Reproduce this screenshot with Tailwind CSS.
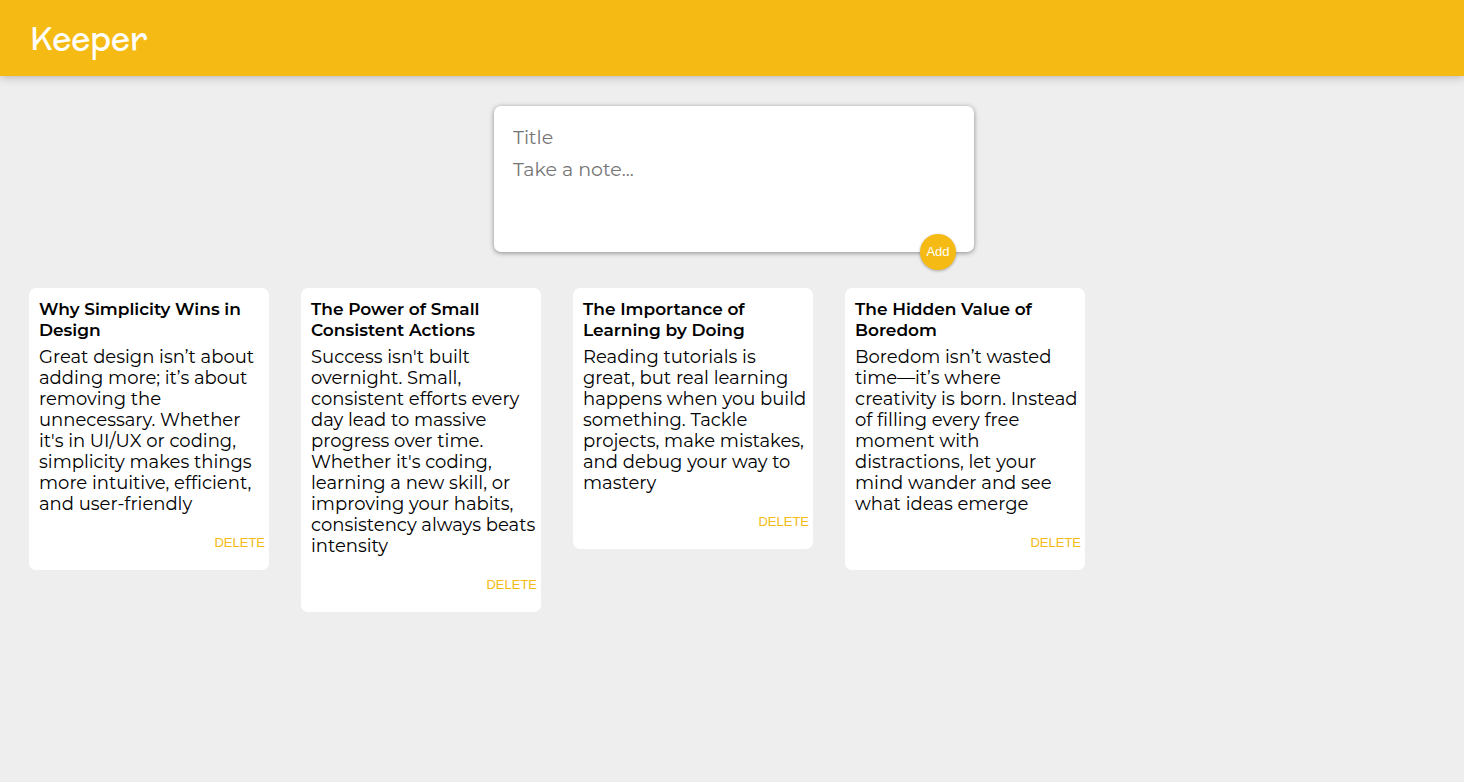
<!DOCTYPE html>
<html lang="en">
<head>
<meta charset="utf-8">
<meta name="viewport" content="width=device-width, initial-scale=1">
<title>Keeper</title>
<script src="https://cdn.jsdelivr.net/npm/@tailwindcss/browser@4"></script>
</head>
<body class="min-h-screen bg-[#eeeeee] font-['Montserrat','Inter',sans-serif] text-black">
<header class="flex h-19 items-center bg-[#f5ba13] px-[30px] shadow-[0_0_10px_rgba(0,0,0,0.3)]">
  <h1 class="font-['McLaren','Inter',sans-serif] text-[32px] leading-[48px] font-normal text-white">Keeper</h1>
</header>
<main>
  <form class="relative left-[2px] mx-auto mt-[30px] flex w-full max-w-[480px] flex-col gap-2 rounded-[7px] bg-white px-[15px] pt-5 pb-[22px] shadow-[0_1px_5px_rgb(138,137,137)]">
    <input type="text" aria-label="Title" placeholder="Title" class="h-6 w-full px-1 text-[19px] leading-6 outline-none placeholder:text-[#757575]">
    <textarea rows="3" aria-label="Note" placeholder="Take a note..." class="block h-[72px] w-full resize-none px-1 text-[19px] leading-6 outline-none placeholder:text-[#757575]"></textarea>
    <button type="button" class="absolute right-[18px] -bottom-[18px] size-9 rounded-full bg-[#f5ba13] font-['Liberation_Sans',sans-serif] text-[13px] text-white shadow-[0_1px_3px_rgba(0,0,0,0.3)]">Add</button>
  </form>
  <section aria-label="Notes" class="mt-9 flex flex-wrap items-start gap-8 px-[29px] pb-8">
    <article class="w-60 rounded-[7px] bg-white pt-[11px]">
      <h2 class="mb-[6px] pr-1 pl-[10px] text-[17px] leading-[21px] font-semibold">Why Simplicity Wins in<br>Design</h2>
      <p class="pr-1 pl-[10px] text-[18px] leading-[21px]">Great design isn’t about<br>adding more; it’s about<br>removing the<br>unnecessary. Whether<br>it's in UI/UX or coding,<br>simplicity makes things<br>more intuitive, efficient,<br>and user-friendly</p>
      <div class="flex h-[55px] items-center justify-end pr-1"><button type="button" class="font-['Liberation_Sans',sans-serif] text-[13px] leading-5 text-[#f5ba13]">DELETE</button></div>
    </article>
    <article class="w-60 rounded-[7px] bg-white pt-[11px]">
      <h2 class="mb-[6px] pr-1 pl-[10px] text-[17px] leading-[21px] font-semibold">The Power of Small<br>Consistent Actions</h2>
      <p class="pr-1 pl-[10px] text-[18px] leading-[21px]">Success isn't built<br>overnight. Small,<br>consistent efforts every<br>day lead to massive<br>progress over time.<br>Whether it's coding,<br>learning a new skill, or<br>improving your habits,<br>consistency always beats<br>intensity</p>
      <div class="flex h-[55px] items-center justify-end pr-1"><button type="button" class="font-['Liberation_Sans',sans-serif] text-[13px] leading-5 text-[#f5ba13]">DELETE</button></div>
    </article>
    <article class="w-60 rounded-[7px] bg-white pt-[11px]">
      <h2 class="mb-[6px] pr-1 pl-[10px] text-[17px] leading-[21px] font-semibold">The Importance of<br>Learning by Doing</h2>
      <p class="pr-1 pl-[10px] text-[18px] leading-[21px]">Reading tutorials is<br>great, but real learning<br>happens when you build<br>something. Tackle<br>projects, make mistakes,<br>and debug your way to<br>mastery</p>
      <div class="flex h-[55px] items-center justify-end pr-1"><button type="button" class="font-['Liberation_Sans',sans-serif] text-[13px] leading-5 text-[#f5ba13]">DELETE</button></div>
    </article>
    <article class="w-60 rounded-[7px] bg-white pt-[11px]">
      <h2 class="mb-[6px] pr-1 pl-[10px] text-[17px] leading-[21px] font-semibold">The Hidden Value of<br>Boredom</h2>
      <p class="pr-1 pl-[10px] text-[18px] leading-[21px]">Boredom isn’t wasted<br>time—it’s where<br>creativity is born. Instead<br>of filling every free<br>moment with<br>distractions, let your<br>mind wander and see<br>what ideas emerge</p>
      <div class="flex h-[55px] items-center justify-end pr-1"><button type="button" class="font-['Liberation_Sans',sans-serif] text-[13px] leading-5 text-[#f5ba13]">DELETE</button></div>
    </article>
  </section>
</main>
</body>
</html>
